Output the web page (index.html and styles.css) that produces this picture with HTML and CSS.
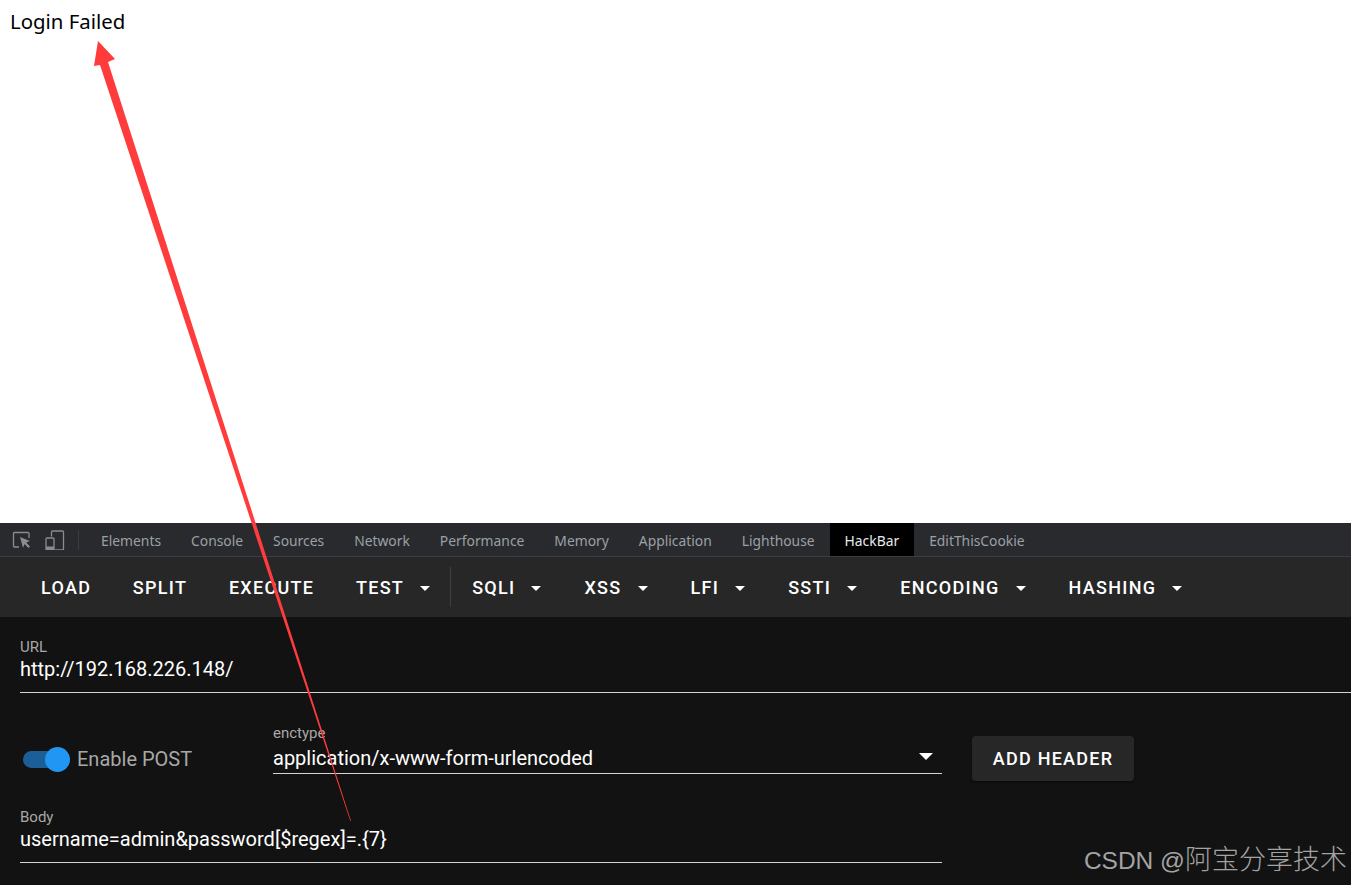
FILE: index.html
```html
<!DOCTYPE html>
<html lang="en">
<head>
<meta charset="utf-8">
<title>Login Failed</title>
<link rel="stylesheet" href="styles.css">
</head>
<body>
<main class="page"><p class="message">Login Failed</p></main>
<section class="devtools">
  <nav class="tabs">
    <svg class="tool-icon" width="20" height="20" viewBox="0 0 20 20" fill="none"><path d="M7 17H2.500a1 1 0 0 1-1-1V3.500a1 1 0 0 1 1-1H16a1 1 0 0 1 1 1V8" stroke="#8a8c90" stroke-width="1.300"/><path d="M8 7l10 4-3.800 1.500 3.800 4-1.600 1.600-3.800-4L11 18z" fill="#8a8c90"/></svg>
    <svg class="tool-icon" width="20" height="20" viewBox="0 0 20 20" fill="none"><path d="M6.500 6.500V2a1 1 0 0 1 1-1h10a1 1 0 0 1 1 1v17a1 1 0 0 1-1 1h-8" stroke="#8a8c90" stroke-width="1.300"/><rect x="1" y="8" width="8" height="12" rx="1" stroke="#8a8c90" stroke-width="1.300"/><rect x="1" y="16.500" width="8" height="3.500" fill="#8a8c90"/></svg>
    <span class="tabs-sep"></span>
    <span class="tab">Elements</span>
    <span class="tab">Console</span>
    <span class="tab">Sources</span>
    <span class="tab">Network</span>
    <span class="tab">Performance</span>
    <span class="tab">Memory</span>
    <span class="tab">Application</span>
    <span class="tab">Lighthouse</span>
    <span class="tab active">HackBar</span>
    <span class="tab">EditThisCookie</span>
  </nav>
  <div class="toolbar">
    <button class="tbtn">LOAD</button>
    <button class="tbtn">SPLIT</button>
    <button class="tbtn">EXECUTE</button>
    <button class="tbtn">TEST<i class="caret"></i></button>
    <span class="toolbar-sep"></span>
    <button class="tbtn">SQLI<i class="caret"></i></button>
    <button class="tbtn">XSS<i class="caret"></i></button>
    <button class="tbtn">LFI<i class="caret"></i></button>
    <button class="tbtn">SSTI<i class="caret"></i></button>
    <button class="tbtn">ENCODING<i class="caret"></i></button>
    <button class="tbtn">HASHING<i class="caret"></i></button>
  </div>
  <div class="panel">
    <div class="field url-field">
      <label class="field-label">URL</label>
      <div class="field-value">http://192.168.226.148/</div>
    </div>
    <div class="post-row">
      <div class="switch-group">
        <span class="switch"><span class="track"></span><span class="thumb"></span></span>
        <span class="switch-label">Enable POST</span>
      </div>
      <div class="field select-field">
        <label class="field-label">enctype</label>
        <div class="field-value select-value">application/x-www-form-urlencoded<i class="select-caret"></i></div>
      </div>
      <button class="add-header">ADD HEADER</button>
    </div>
    <div class="field body-field">
      <label class="field-label">Body</label>
      <div class="field-value">username=admin&amp;password[$regex]=.{7}</div>
    </div>
  </div>
</section>
<span class="watermark">CSDN @<span class="watermark-cjk">阿宝分享技术</span></span>
<svg class="arrow" width="1351" height="885" viewBox="0 0 1351 885"><polygon points="98,41 115,59 108,62 351,821 350.300,821 100,65 94,66" fill="#ff3b3b"/></svg>
</body>
</html>
```

FILE: styles.css
```css
* { box-sizing: border-box; }
html, body { margin: 0; height: 885px; overflow: hidden; }
body { font-family: Roboto, sans-serif; background: #fff; display: flex; flex-direction: column; position: relative; }
.page { height: 523px; padding: 10px; background: #fff; }
.message { margin: 0; font: 20.4px/22px "Noto Sans", sans-serif; color: #000; }
.devtools { flex: 1; background: #121212; display: flex; flex-direction: column; }
.tabs { height: 34px; background: #292a2d; border-bottom: 1px solid #3c3d40; display: flex; align-items: center; padding-left: 12px; }
.tool-icon { margin-right: 14px; flex: none; }
.tool-icon + .tool-icon { margin-right: 0; margin-left: -1px; }
.tabs-sep { width: 1px; height: 20px; background: #3c3d40; margin: 0 7px 0 13px; }
.tab { height: 33px; padding: 2px 15px 0; font: 13.85px/31px "Noto Sans", sans-serif; color: #9aa0a6; }
.tab.active { background: #000; color: #e8eaed; }
.toolbar { height: 60px; background: #272727; display: flex; align-items: center; padding-left: 20px; }
.tbtn { height: 36px; padding: 2px 20.6px 0 21px; border: 0; background: none; color: #fff; font: 500 18px/34px Roboto, sans-serif; letter-spacing: 1.3px; display: flex; align-items: center; }
.caret { width: 0; height: 0; border: 5px solid transparent; border-top-color: #fff; border-bottom: 0; margin: 0 1.400px 0 16px; }
.toolbar-sep { width: 1px; height: 40px; background: #3e3e3e; margin-left: -2px; }
.panel { flex: 1; padding: 22px 0 0 20px; }
.field { display: flex; flex-direction: column; }
.field-label { font-size: 15px; line-height: 16px; color: #a8a8a8; }
.field-value { font-size: 20px; line-height: 28px; color: #fff; border-bottom: 1px solid #d4d4d4; height: 38px; }
.post-row { display: flex; align-items: flex-start; margin-top: 32px; height: 60px; }
.switch-group { display: flex; align-items: center; width: 253px; padding-left: 3px; margin-top: 22px; }
.switch { position: relative; width: 46px; height: 24px; display: block; }
.track { position: absolute; left: 0; top: 4px; width: 40px; height: 17px; border-radius: 9px; background: #1c5f98; }
.thumb { position: absolute; left: 22px; top: 0; width: 25px; height: 25px; border-radius: 50%; background: #2196f3; }
.switch-label { font-size: 20px; color: #a8a8a8; margin-left: 8px; }
.select-field { width: 669px; }
.select-value { position: relative; height: 33px; line-height: 34px; }
.select-caret { position: absolute; right: 9px; top: 12px; width: 0; height: 0; border: 7px solid transparent; border-top-color: #fff; border-bottom: 0; }
.add-header { width: 162px; height: 45px; margin: 11px 0 0 30px; border: 0; border-radius: 4px; background: #272727; color: #fff; font: 500 18px Roboto, sans-serif; letter-spacing: 1.25px; box-shadow: 0 2px 3px rgba(0,0,0,.3); }
.body-field { width: 922px; margin-top: 24px; }
.watermark { position: absolute; right: 4px; bottom: 7px; font: 24.5px/34px "Liberation Sans", sans-serif; color: #a3a3a3; }
.watermark-cjk { font: 300 27px/34px "Noto Sans CJK SC", sans-serif; }
.arrow { position: absolute; left: 0; top: 0; pointer-events: none; }
```
